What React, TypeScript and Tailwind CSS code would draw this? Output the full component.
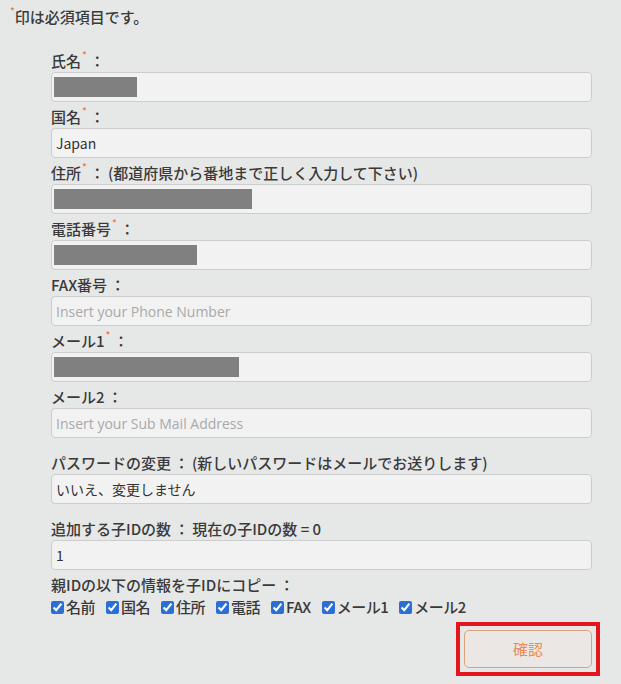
import React from 'react';

// 項目定義
interface Field {
  label: string;
  required?: boolean;
  note?: string;
  value?: string;
  placeholder?: string;
  redact?: number;
  spaced?: boolean;
}

const fields: Field[] = [
  { label: '氏名', required: true, redact: 83 },
  { label: '国名', required: true, value: 'Japan' },
  { label: '住所', required: true, note: '(都道府県から番地まで正しく入力して下さい)', redact: 198 },
  { label: '電話番号', required: true, redact: 143 },
  { label: 'FAX番号', placeholder: 'Insert your Phone Number' },
  { label: 'メール1', required: true, redact: 185 },
  { label: 'メール2', placeholder: 'Insert your Sub Mail Address' },
  { label: 'パスワードの変更', note: '(新しいパスワードはメールでお送りします)', value: 'いいえ、変更しません', spaced: true },
  { label: '追加する子IDの数', note: '現在の子IDの数 = 0', value: '1', spaced: true },
];

const copyItems = ['名前', '国名', '住所', '電話', 'FAX', 'メール1', 'メール2'];

const jp = "font-['Noto_Sans_CJK_JP','Noto_Sans',sans-serif]";

function Asterisk() {
  return <span className="text-[10px] leading-none align-top text-[#e8744a] ml-[1px]">*</span>;
}

function Label({ f }: { f: Field }) {
  return (
    <div className={`h-[26px] pt-[4px] leading-[22px] text-[15px] font-medium text-[#3a3a3a] whitespace-nowrap ${f.spaced ? 'mt-[10px]' : ''}`}>
      {f.label}
      {f.required && <Asterisk />}
      <span className="mx-[3px]">：</span>
      {f.note}
    </div>
  );
}

function FieldInput({ f }: { f: Field }) {
  return (
    <div className="h-[30px] bg-[#f2f2f2] border border-[#cdcdcd] rounded-[4px] flex items-center px-[2px] text-[14px] text-[#333]">
      {f.redact ? (
        <div className="h-[20px] bg-[#808080]" style={{ width: f.redact }} />
      ) : f.value ? (
        <span className="pl-[2px]">{f.value}</span>
      ) : (
        <span className="pl-[2px] text-[#a9a9a9] font-['Open_Sans',sans-serif]">{f.placeholder}</span>
      )}
    </div>
  );
}

export default function App() {
  return (
    <div className={`w-[621px] h-[684px] bg-[#e6e7e7] ${jp} overflow-hidden`}>
      {/* 注記 */}
      <div className="mt-[6px] h-[22px] leading-[22px] pl-[10px] text-[15px] font-medium text-[#3a3a3a]">
        <span className="text-[10px] leading-none align-top text-[#e8744a]">*</span>
        印は必須項目です。
      </div>

      {/* フォーム */}
      <div className="mt-[18px] ml-[51px] w-[541px]">
        {fields.map(f => (
          <div key={f.label}>
            <Label f={f} />
            <FieldInput f={f} />
          </div>
        ))}

        <div className="h-[26px] pt-[4px] leading-[22px] text-[15px] font-medium text-[#3a3a3a]">
          親IDの以下の情報を子IDにコピー<span className="mx-[3px]">：</span>
        </div>
        <div className="h-[22px] flex items-center gap-[11px] text-[15px] font-medium text-[#3a3a3a]">
          {copyItems.map(c => (
            <label key={c} className="flex items-center tracking-[-0.5px]">
              <input type="checkbox" defaultChecked className="w-[13px] h-[13px] m-0 mr-[2px] accent-[#2b6fd6]" />
              {c}
            </label>
          ))}
        </div>

        <div className="flex justify-end mt-[12px]">
          <div className="relative">
            <button className="w-[128px] h-[38px] rounded-[5px] border border-[#d9a27c] bg-[#ebe7e4] text-[15px] text-[#ea8a55]">
              確認
            </button>
            <div className="absolute -inset-2 border-4 border-[#e3161d] pointer-events-none" />
          </div>
        </div>
      </div>
    </div>
  );
}
